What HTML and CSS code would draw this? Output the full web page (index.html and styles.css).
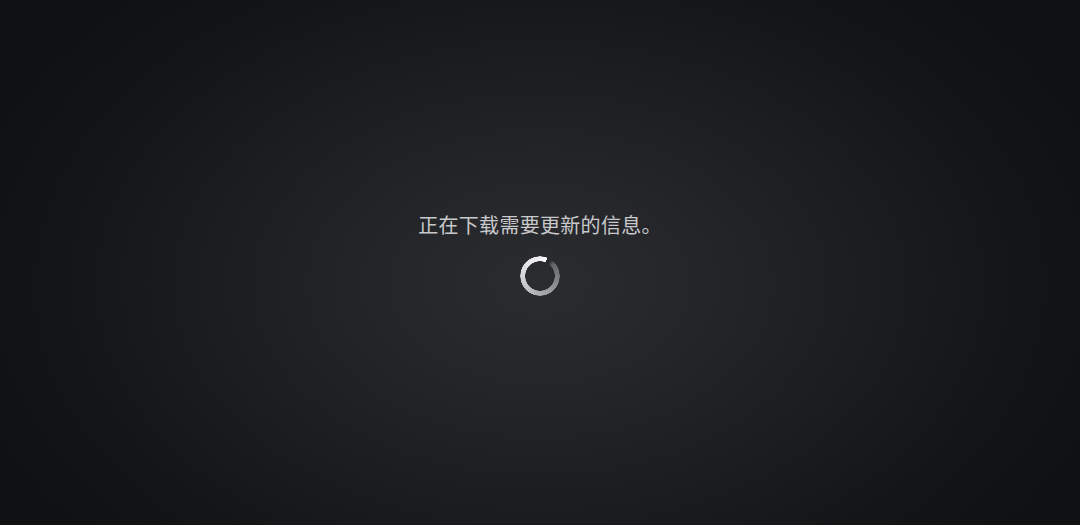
FILE: index.html
```html
<!DOCTYPE html>
<html lang="zh-CN">
<head>
<meta charset="utf-8">
<title>正在下载</title>
<link rel="stylesheet" href="styles.css">
</head>
<body>
<main class="screen">
  <p class="message">正在下载需要更新的信息。</p>
  <div class="spinner" aria-label="加载中"></div>
</main>
</body>
</html>
```

FILE: styles.css
```css
html, body {
  margin: 0;
  padding: 0;
  height: 100%;
}

body {
  background: radial-gradient(ellipse 55% 75% at 50% 54%, #2b2c30 0%, #25262a 25%, #1c1d20 55%, #141517 80%, #101113 100%);
  background-color: #101113;
  font-family: "Noto Sans CJK SC", "Noto Sans", sans-serif;
  overflow: hidden;
}

.screen {
  box-sizing: border-box;
  height: 100vh;
  display: flex;
  flex-direction: column;
  align-items: center;
  padding-top: 211px;
}

.message {
  margin: 0;
  font-size: 20px;
  line-height: 28px;
  color: #c8c9cb;
  letter-spacing: 0.3px;
}

.spinner {
  margin-top: 17px;
  width: 40px;
  height: 40px;
  border-radius: 50%;
  background: conic-gradient(from 22deg,
    rgba(90, 90, 92, 0) 0deg,
    rgba(90, 90, 92, 0) 12deg,
    #646568 26deg,
    #828386 80deg,
    #a2a3a6 140deg,
    #bfc0c3 200deg,
    #dcdddf 270deg,
    #efeff0 330deg,
    #f7f7f7 350deg,
    #f7f7f7 360deg);
  -webkit-mask: radial-gradient(circle, transparent 14.5px, #000 15px, #000 19.5px, transparent 20px);
  mask: radial-gradient(circle, transparent 14.5px, #000 15px, #000 19.5px, transparent 20px);
}
```
